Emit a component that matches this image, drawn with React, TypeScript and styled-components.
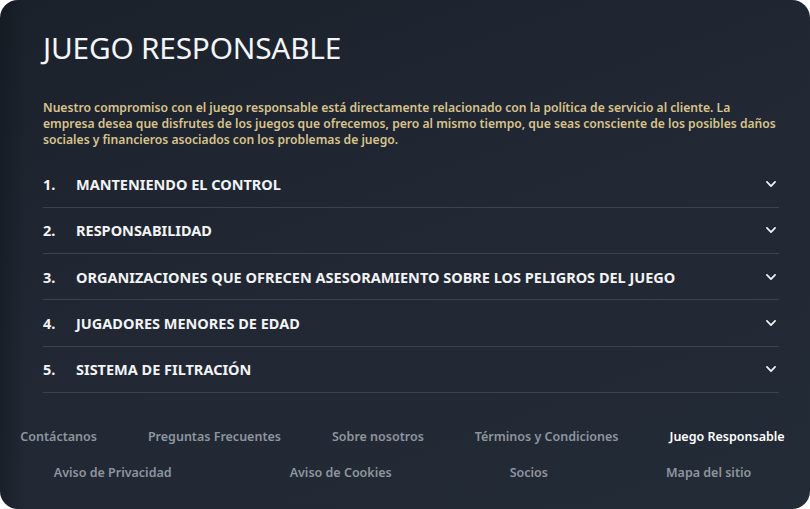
import styled, { createGlobalStyle } from "styled-components";

const GlobalStyle = createGlobalStyle`
  html, body {
    margin: 0;
    padding: 0;
    background: #ffffff;
  }
  body {
    font-family: "Noto Sans", "Open Sans", sans-serif;
  }
`;

const Card = styled.div`
  width: 810px;
  height: 509px;
  box-sizing: border-box;
  border-radius: 18px;
  overflow: hidden;
  background:
    linear-gradient(90deg, rgba(10, 14, 20, 0.35) 0px, rgba(10, 14, 20, 0) 26px),
    linear-gradient(160deg, #1b212b 0%, #212833 45%, #232b37 100%);
  padding-top: 28px;
`;

const Main = styled.div`
  padding: 0 31px 0 43px;
`;

const Title = styled.h1`
  margin: 0;
  font-family: "Noto Sans", sans-serif;
  font-weight: 400;
  font-size: 29.8px;
  line-height: 40px;
  color: #f4f5f7;
  letter-spacing: -0.2px;
`;

const Intro = styled.p`
  margin: 32px 0 13.5px;
  font-size: 12.15px;
  line-height: 16px;
  font-weight: 600;
  color: #d8c38d;
`;

const List = styled.div`
  display: flex;
  flex-direction: column;
`;

const Row = styled.div`
  display: flex;
  align-items: center;
  box-sizing: border-box;
  height: 46.25px;
  border-bottom: 1.5px solid #3a4350;
  color: #f2f3f5;
  font-size: 14.5px;
  font-weight: 700;
  text-transform: uppercase;
`;

const Num = styled.span`
  width: 33px;
  flex-shrink: 0;
`;

const RowTitle = styled.span`
  flex: 1;
`;

const Chevron = styled.svg`
  width: 14px;
  height: 14px;
  margin-right: 1px;
`;

const Footer = styled.div`
  display: flex;
  flex-direction: column;
  gap: 17px;
  margin-top: 34.5px;
`;

const FooterRow = styled.div<{ $gap: number }>`
  display: flex;
  justify-content: center;
  gap: ${(p) => p.$gap}px;
  padding-right: 5px;
`;

const FooterLink = styled.a<{ $active?: boolean }>`
  font-size: 12.5px;
  line-height: 19px;
  font-weight: 600;
  text-decoration: none;
  white-space: nowrap;
  color: ${(p) => (p.$active ? "#ffffff" : "#8f959e")};
`;

const items = [
  "Manteniendo el control",
  "Responsabilidad",
  "Organizaciones que ofrecen asesoramiento sobre los peligros del juego",
  "Jugadores menores de edad",
  "Sistema de filtración",
];

const footerTop = [
  { text: "Contáctanos" },
  { text: "Preguntas Frecuentes" },
  { text: "Sobre nosotros" },
  { text: "Términos y Condiciones" },
  { text: "Juego Responsable", active: true },
];

const footerBottom = ["Aviso de Privacidad", "Aviso de Cookies", "Socios", "Mapa del sitio"];

export default function App() {
  return (
    <>
      <GlobalStyle />
      <Card>
        <Main>
          <Title>JUEGO RESPONSABLE</Title>
          <Intro>
            Nuestro compromiso con el juego responsable está directamente relacionado con la política de servicio al
            cliente. La empresa desea que disfrutes de los juegos que ofrecemos, pero al mismo tiempo, que seas
            consciente de los posibles daños sociales y financieros asociados con los problemas de juego.
          </Intro>
          <List>
            {items.map((item, i) => (
              <Row key={i}>
                <Num>{i + 1}.</Num>
                <RowTitle>{item}</RowTitle>
                <Chevron viewBox="0 0 24 24" fill="none" stroke="#f2f3f5" strokeWidth="3" strokeLinecap="round" strokeLinejoin="round">
                  <path d="M5 8.5l7 7 7-7" />
                </Chevron>
              </Row>
            ))}
          </List>
        </Main>
        <Footer>
          <FooterRow $gap={51}>
            {footerTop.map((l) => (
              <FooterLink key={l.text} $active={l.active}>
                {l.text}
              </FooterLink>
            ))}
          </FooterRow>
          <FooterRow $gap={118}>
            {footerBottom.map((t) => (
              <FooterLink key={t}>{t}</FooterLink>
            ))}
          </FooterRow>
        </Footer>
      </Card>
    </>
  );
}
